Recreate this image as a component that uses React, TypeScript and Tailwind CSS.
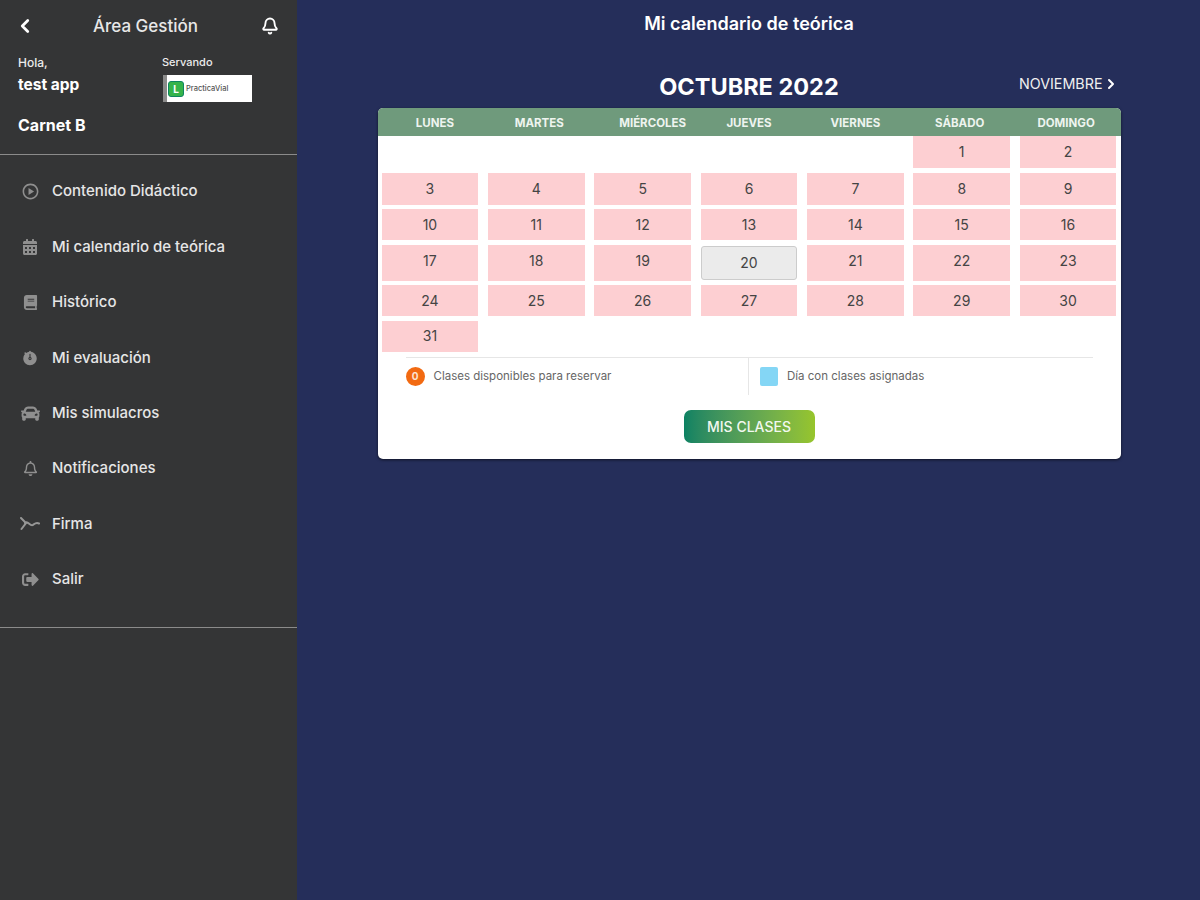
import React from 'react';
import {ChevronLeft, ChevronRight, Bell} from 'lucide-react';
import {FaCalendarAlt, FaBook, FaCar, FaRegBell, FaSignOutAlt} from 'react-icons/fa';
import {MdOutlinePlayCircle} from 'react-icons/md';
import {IoStopwatch} from 'react-icons/io5';

const FirmaIcon: React.FC = () => (
    <svg width="20" height="14" viewBox="0 0 20 14" fill="none" stroke="#969696" strokeWidth="2" strokeLinecap="round">
        <path d="M1 1 L6 6 L1.5 12 M5 6 C8 3 10 10 13 8 C15 6.5 16 5 19 6.5"/>
    </svg>
);

const menuItems = [
    {label: 'Contenido Didáctico', icon: <MdOutlinePlayCircle size={19} color="#8f8f8f"/>},
    {label: 'Mi calendario de teórica', icon: <FaCalendarAlt size={16} color="#8f8f8f"/>},
    {label: 'Histórico', icon: <FaBook size={15} color="#8f8f8f"/>},
    {label: 'Mi evaluación', icon: <IoStopwatch size={18} color="#8f8f8f"/>},
    {label: 'Mis simulacros', icon: <FaCar size={19} color="#8f8f8f"/>},
    {label: 'Notificaciones', icon: <FaRegBell size={15} color="#8f8f8f"/>},
    {label: 'Firma', icon: <FirmaIcon/>},
    {label: 'Salir', icon: <FaSignOutAlt size={17} color="#8f8f8f"/>},
];

const weekDays = [
    {label: 'LUNES', offset: 'pl-[10px]'},
    {label: 'MARTES', offset: 'pl-[6px]'},
    {label: 'MIÉRCOLES', offset: 'pl-[20px]'},
    {label: 'JUEVES', offset: ''},
    {label: 'VIERNES', offset: ''},
    {label: 'SÁBADO', offset: 'pr-[4px]'},
    {label: 'DOMINGO', offset: 'pr-[4px]'},
];
const days = Array.from({length: 31}, (_, i) => i + 1);

const Sidebar: React.FC = () => (
    <aside className="w-[297px] shrink-0 min-h-screen bg-[#343536] text-[#ececec]">
        <div className="h-[52px] flex items-center justify-between pl-[14px] pr-[18px]">
            <ChevronLeft size={22} strokeWidth={3} color="#ffffff"/>
            <span className="text-[17px] font-medium text-[#e8e8e8] mr-[6px] pt-[2px]">Área Gestión</span>
            <Bell size={18} strokeWidth={2.5} color="#ffffff"/>
        </div>
        <div className="h-[103px] border-b border-[#8b8b8b] pl-[18px]">
            <div className="grid grid-cols-[144px_1fr]">
                <div className="pt-[4px]">
                    <div className="text-[12px] leading-[14px] font-medium">Hola,</div>
                    <div className="text-[15.5px] leading-[16px] font-bold mt-[7px] text-white">test app</div>
                </div>
                <div>
                    <div className="text-[11px] leading-[14px] pt-[3px] font-medium">Servando</div>
                    <div className="mt-[6px] ml-[1px] w-[89px] h-[27px] bg-white border-l-[4px] border-[#8a8a8a] flex items-center gap-[2px] pl-[1px]">
                        <div className="w-[16px] h-[16px] rounded-[3px] bg-[#35b34a] border border-[#0f8560] flex items-center justify-center text-[10px] leading-none font-bold text-white">L</div>
                        <span className="text-[7.5px] font-medium text-[#555555] whitespace-nowrap">PracticaVial</span>
                    </div>
                </div>
            </div>
            <div className="text-[16px] leading-[18px] font-bold text-white mt-[14px]">Carnet B</div>
        </div>
        <nav className="pt-[9px] h-[473px] border-b border-[#8b8b8b]">
            {menuItems.map((item) => (
                <div key={item.label} className="h-[55.4px] flex items-center">
                    <span className="w-[52px] pl-[8px] flex justify-center shrink-0">{item.icon}</span>
                    <span className="text-[15px] font-medium text-[#e6e6e6]">{item.label}</span>
                </div>
            ))}
        </nav>
    </aside>
);

const Calendar: React.FC = () => (
    <div className="w-[743px] mx-auto bg-white rounded-[5px] overflow-hidden shadow-[0_1px_3px_rgba(0,0,0,0.6)]">
        <div className="grid grid-cols-7 gap-x-[9.5px] px-[4px] pt-[3px] h-[28px] bg-[#6f9a7c] items-center">
            {weekDays.map((day) => (
                <div key={day.label} className={`${day.offset} text-center text-[11.5px] font-bold text-[#eef4ef]`}>{day.label}</div>
            ))}
        </div>
        <div className="grid grid-cols-7 grid-rows-[32px_32px_31px_36px_31px_31px] gap-x-[9.5px] gap-y-[4.6px] px-[4px]">
            {days.map((day) => (
                day === 20 ? (
                    <div key={day} className="my-[1px] flex items-center justify-center rounded-[3px] bg-[#ebebeb] border border-[#cccccc] text-[14px] text-[#444444]">
                        {day}
                    </div>
                ) : (
                    <div
                        key={day}
                        className={`${day === 1 ? 'col-start-6' : ''} ${day >= 17 && day <= 23 ? 'pb-[4px]' : 'pb-[1px]'} flex items-center justify-center bg-[#fdcfd2] text-[14px] text-[#444444]`}
                    >
                        {day}
                    </div>
                )
            ))}
        </div>
        <div className="mx-[28px] mt-[5px] border-t border-[#e6e6e6] grid grid-cols-2 h-[38px]">
            <div className="flex items-center gap-[9px] border-r border-[#e6e6e6]">
                <div className="w-[19px] h-[19px] rounded-full bg-[#f26a12] border-[3px] border-[#f26a12] flex items-center justify-center text-[10px] leading-none font-bold text-[#fde3d0]">0</div>
                <span className="text-[11.5px] text-[#666666]">Clases disponibles para reservar</span>
            </div>
            <div className="flex items-center gap-[9px] pl-[11px]">
                <div className="w-[18px] h-[19px] rounded-[2px] bg-[#84d6f5]"/>
                <span className="text-[11.5px] text-[#666666]">Día con clases asignadas</span>
            </div>
        </div>
        <div className="flex justify-center pt-[15px] pb-[16px]">
            <button className="w-[131px] h-[33px] rounded-[7px] bg-gradient-to-r from-[#0b8263] to-[#97c52b] text-[14px] font-medium text-[#f2f8f0]">
                MIS CLASES
            </button>
        </div>
    </div>
);

const App: React.FC = () => {
    return (
        <div className="flex min-h-screen bg-[#252e5a] font-['Inter','Liberation_Sans',sans-serif]">
            <Sidebar/>
            <main className="flex-1 pl-[1px]">
                <h1 className="h-[47px] flex items-center justify-center text-[18px] font-semibold text-white">
                    Mi calendario de teórica
                </h1>
                <div className="w-[743px] mx-auto h-[61px] grid grid-cols-[1fr_auto_1fr] items-center">
                    <div/>
                    <h2 className="text-[23.5px] font-bold text-white pt-[18px]">OCTUBRE 2022</h2>
                    <div className="flex items-center justify-end text-[14.3px] text-[#f0f0f0] pr-[2px] pt-[12px]">
                        NOVIEMBRE
                        <ChevronRight size={16} strokeWidth={3} color="#ffffff"/>
                    </div>
                </div>
                <Calendar/>
            </main>
        </div>
    );
};

export default App;
